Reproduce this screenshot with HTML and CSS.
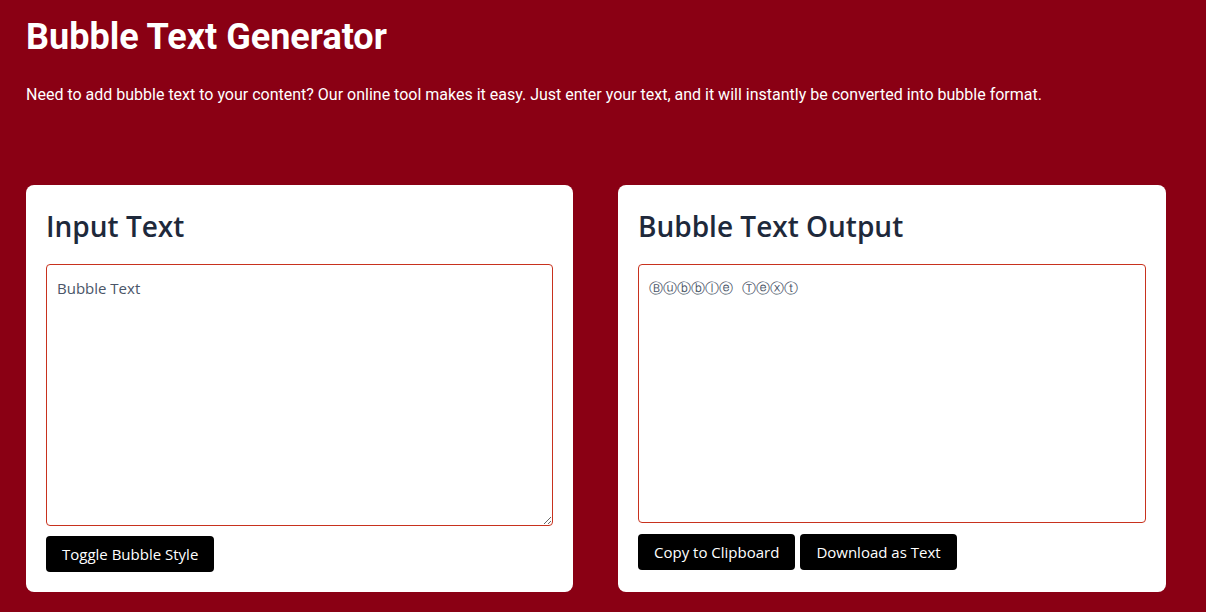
FILE: index.html
```html
<!DOCTYPE html>
<html lang="en">
<head>
<meta charset="utf-8">
<title>Bubble Text Generator</title>
<link rel="stylesheet" href="styles.css">
</head>
<body>
<header class="hero">
  <h1 class="title">Bubble Text Generator</h1>
  <p class="lead">Need to add bubble text to your content? Our online tool makes it easy. Just enter your text, and it will instantly be converted into bubble format.</p>
</header>
<main class="panels">
  <section class="card">
    <h2 class="card-title">Input Text</h2>
    <textarea class="field field-input">Bubble Text</textarea>
    <div class="actions actions-input">
      <button class="btn">Toggle Bubble Style</button>
    </div>
  </section>
  <section class="card">
    <h2 class="card-title">Bubble Text Output</h2>
    <div class="field field-output">Ⓑⓤⓑⓑⓛⓔ&nbsp; Ⓣⓔⓧⓣ</div>
    <div class="actions actions-output">
      <button class="btn">Copy to Clipboard</button>
      <button class="btn">Download as Text</button>
    </div>
  </section>
</main>
</body>
</html>
```

FILE: styles.css
```css
* { box-sizing: border-box; }
html, body {
  margin: 0;
  padding: 0;
  background: #8a0014;
}
body {
  font-family: Roboto, "Liberation Sans", sans-serif;
  color: #ffffff;
  padding: 16px 40px 20px 26px;
  min-height: 612px;
}
.title {
  margin: 0;
  font-size: 36px;
  font-weight: 700;
  line-height: 42px;
}
.lead {
  margin: 25px 0 0;
  font-size: 16px;
  line-height: 24px;
}
.panels {
  margin-top: 78px;
  display: grid;
  grid-template-columns: 547px 548px;
  column-gap: 45px;
}
.card {
  background: #ffffff;
  border-radius: 8px;
  padding: 20px;
  font-family: "Open Sans", "Noto Sans", sans-serif;
  height: 407px;
}
.card-title {
  margin: 3px 0 0;
  font-size: 28px;
  font-weight: 600;
  line-height: 36px;
  color: #1e293b;
}
.field {
  display: block;
  width: 100%;
  margin-top: 20px;
  border: 1px solid #c8321e;
  border-radius: 4px;
  padding: 13px 10px;
  font-family: "Open Sans", "Noto Sans", sans-serif;
  font-size: 15px;
  line-height: 20px;
  color: #4a5568;
  background: #ffffff;
}
.field-input {
  height: 262px;
  resize: vertical;
}
.field-output {
  height: 259px;
  font-family: "DejaVu Sans", "Noto Sans", sans-serif;
  font-size: 14px;
  font-variant-emoji: text;
}
.actions {
  display: flex;
  gap: 5px;
}
.actions-input { margin-top: 10px; }
.actions-output { margin-top: 11px; }
.btn {
  background: #000000;
  color: #ffffff;
  border: none;
  border-radius: 4px;
  height: 36px;
  padding: 0 16px;
  font-family: "Open Sans", "Noto Sans", sans-serif;
  font-size: 15px;
  cursor: pointer;
}
```
